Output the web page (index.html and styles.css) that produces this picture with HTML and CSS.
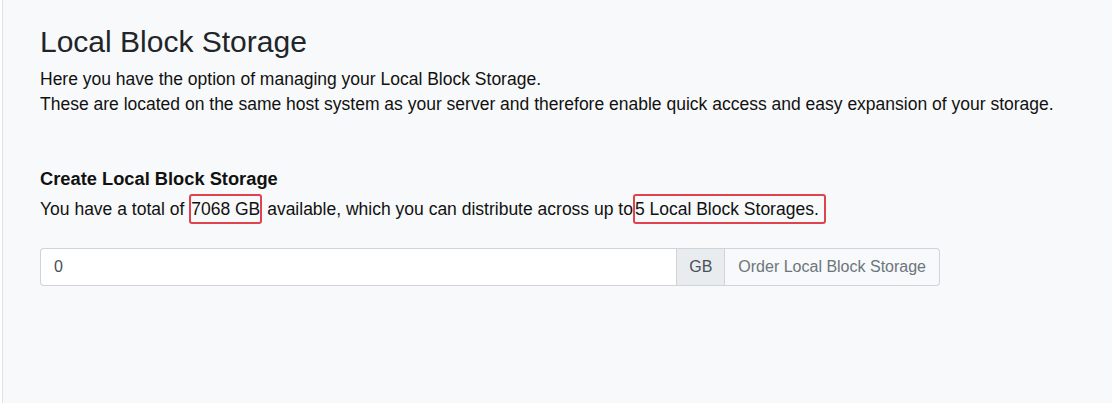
FILE: index.html
```html
<!DOCTYPE html>
<html lang="en">
<head>
<meta charset="utf-8">
<title>Local Block Storage</title>
<link rel="stylesheet" href="styles.css">
</head>
<body>
<div class="shell">
  <main class="content">
    <h1 class="title">Local Block Storage</h1>
    <p class="intro">Here you have the option of managing your Local Block Storage.<br>These are located on the same host system as your server and therefore enable quick access and easy expansion of your storage.</p>

    <section class="create">
      <h2 class="create-title">Create Local Block Storage</h2>
      <p class="create-text">You have a total of <span class="mark">7068 GB</span> available, which you can distribute across up to<span class="mark">5 Local Block Storages.&nbsp;</span></p>

      <div class="input-group">
        <input class="amount" type="text" value="0">
        <span class="unit">GB</span>
        <button class="order" type="button">Order Local Block Storage</button>
      </div>
    </section>
  </main>
</div>
</body>
</html>
```

FILE: styles.css
```css
* { box-sizing: border-box; }

html, body {
  margin: 0;
  height: 100%;
  background: #ffffff;
}

body {
  font-family: "Liberation Sans", Arial, sans-serif;
  color: #212529;
  font-size: 16px;
  line-height: 1.5;
}

.shell {
  height: 100%;
  padding-left: 2px;
  display: flex;
}

.content {
  flex: 1;
  background: #f8f9fa;
  border-left: 1px solid #dee2e6;
  padding: 24px 0 0 37px;
}

.title {
  margin: 0 0 7px;
  font-size: 30px;
  font-weight: 400;
  line-height: 1.2;
  color: #212529;
}

.intro {
  margin: 0;
  font-size: 17.5px;
  line-height: 25px;
  color: #111;
}

.create {
  margin-top: 51px;
}

.create-title {
  margin: 0 0 7px;
  font-size: 18.3px;
  font-weight: 700;
  line-height: 1.2;
  color: #111;
}

.create-text {
  margin: 0 0 26px;
  font-size: 17.5px;
  line-height: 25px;
  color: #111;
}

.mark {
  border: 2px solid #e0434d;
  border-radius: 3px;
  padding: 3px 0;
}

.input-group {
  display: flex;
  width: 900px;
  height: 38px;
}

.amount {
  flex: 1;
  min-width: 0;
  height: 38px;
  padding: 6px 12px 6px 13px;
  font: inherit;
  color: #495057;
  background: #fff;
  border: 1px solid #ced4da;
  border-right: 0;
  border-radius: 4px 0 0 4px;
  outline: none;
}

.unit {
  display: flex;
  align-items: center;
  padding: 0 12px 0 12px;
  background: #e9ecef;
  border: 1px solid #ced4da;
  color: #495057;
}

.order {
  height: 38px;
  padding: 0 13px;
  font: inherit;
  color: #6c757d;
  background: #f8f9fa;
  border: 1px solid #ced4da;
  border-left: 0;
  border-radius: 0 4px 4px 0;
}
```
